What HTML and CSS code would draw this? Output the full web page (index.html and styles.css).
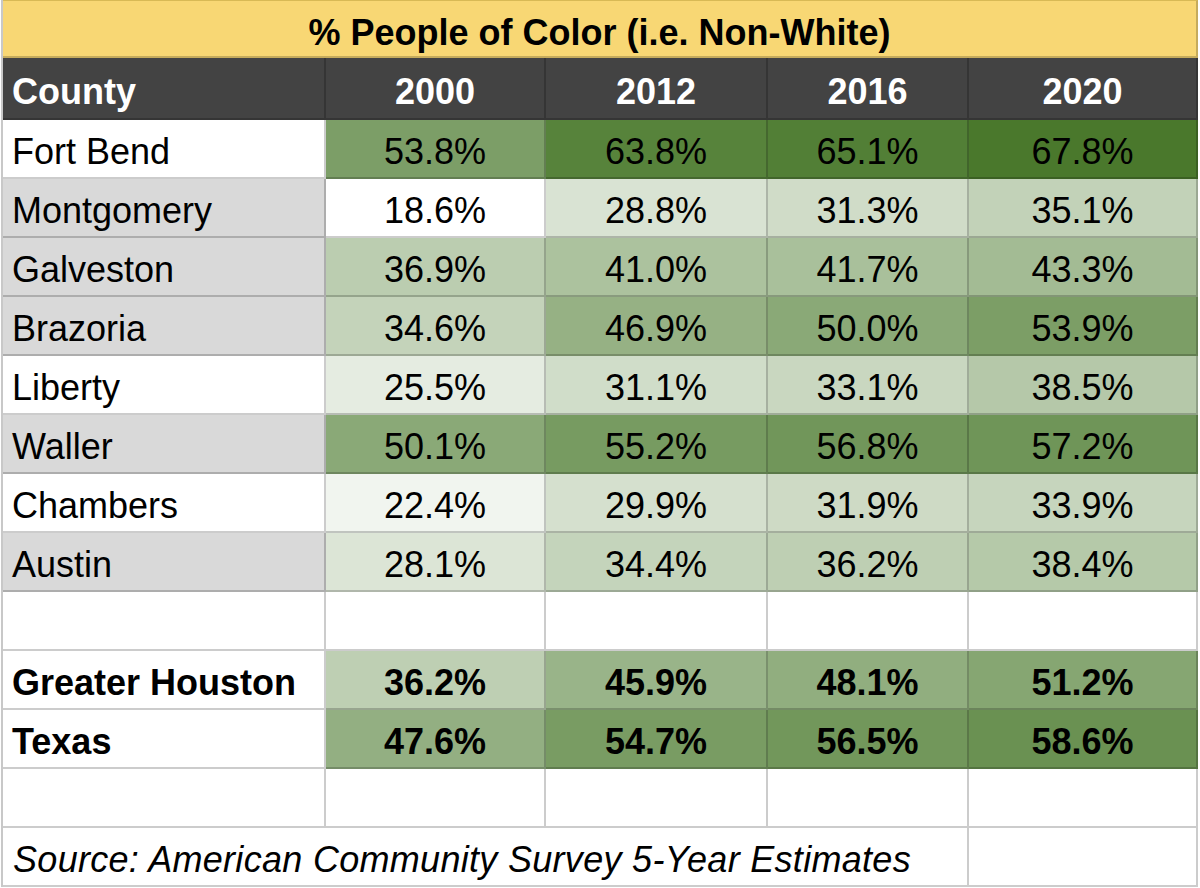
FILE: index.html
```html
<!DOCTYPE html>
<html>
<head>
<meta charset="utf-8">
<link rel="stylesheet" href="styles.css">
</head>
<body>
<div class="sheet">
  <div class="cell title">% People of Color (i.e. Non-White)</div>

  <div class="cell head label">County</div>
  <div class="cell head">2000</div>
  <div class="cell head">2012</div>
  <div class="cell head">2016</div>
  <div class="cell head">2020</div>

  <div class="cell label">Fort Bend</div>
  <div class="cell" style="background:#7c9e67">53.8%</div>
  <div class="cell" style="background:#57833b">63.8%</div>
  <div class="cell" style="background:#527f36">65.1%</div>
  <div class="cell" style="background:#4a782c">67.8%</div>

  <div class="cell label gray">Montgomery</div>
  <div class="cell" style="background:#ffffff">18.6%</div>
  <div class="cell" style="background:#d9e3d3">28.8%</div>
  <div class="cell" style="background:#d0dcc8">31.3%</div>
  <div class="cell" style="background:#c2d2b8">35.1%</div>

  <div class="cell label gray">Galveston</div>
  <div class="cell" style="background:#bbcdb0">36.9%</div>
  <div class="cell" style="background:#acc29e">41.0%</div>
  <div class="cell" style="background:#a9c09b">41.7%</div>
  <div class="cell" style="background:#a3bb94">43.3%</div>

  <div class="cell label gray">Brazoria</div>
  <div class="cell" style="background:#c4d3ba">34.6%</div>
  <div class="cell" style="background:#96b184">46.9%</div>
  <div class="cell" style="background:#8aa977">50.0%</div>
  <div class="cell" style="background:#7c9e66">53.9%</div>

  <div class="cell label">Liberty</div>
  <div class="cell" style="background:#e5ece1">25.5%</div>
  <div class="cell" style="background:#d0ddc9">31.1%</div>
  <div class="cell" style="background:#c9d7c0">33.1%</div>
  <div class="cell" style="background:#b5c8a9">38.5%</div>

  <div class="cell label gray">Waller</div>
  <div class="cell" style="background:#8aa977">50.1%</div>
  <div class="cell" style="background:#779b61">55.2%</div>
  <div class="cell" style="background:#71965a">56.8%</div>
  <div class="cell" style="background:#6f9558">57.2%</div>

  <div class="cell label">Chambers</div>
  <div class="cell" style="background:#f1f5ef">22.4%</div>
  <div class="cell" style="background:#d5e0ce">29.9%</div>
  <div class="cell" style="background:#cedac5">31.9%</div>
  <div class="cell" style="background:#c6d5bd">33.9%</div>

  <div class="cell label gray">Austin</div>
  <div class="cell" style="background:#dce5d6">28.1%</div>
  <div class="cell" style="background:#c4d4bb">34.4%</div>
  <div class="cell" style="background:#becfb3">36.2%</div>
  <div class="cell" style="background:#b5c9a9">38.4%</div>

  <div class="cell"></div>
  <div class="cell"></div>
  <div class="cell"></div>
  <div class="cell"></div>
  <div class="cell"></div>

  <div class="cell label bold">Greater Houston</div>
  <div class="cell bold" style="background:#becfb3">36.2%</div>
  <div class="cell bold" style="background:#99b489">45.9%</div>
  <div class="cell bold" style="background:#91ae7f">48.1%</div>
  <div class="cell bold" style="background:#86a672">51.2%</div>

  <div class="cell label bold">Texas</div>
  <div class="cell bold" style="background:#93af82">47.6%</div>
  <div class="cell bold" style="background:#799c63">54.7%</div>
  <div class="cell bold" style="background:#72975b">56.5%</div>
  <div class="cell bold" style="background:#6a9152">58.6%</div>

  <div class="cell"></div>
  <div class="cell"></div>
  <div class="cell"></div>
  <div class="cell"></div>
  <div class="cell"></div>

  <div class="cell label source">Source: American Community Survey 5-Year Estimates</div>
  <div class="cell"></div>
</div>
</body>
</html>
```
FILE: styles.css
```css
html, body {
  margin: 0;
  padding: 0;
  background: #ffffff;
}

body {
  font-family: "Liberation Sans", Arial, sans-serif;
  font-size: 36px;
  color: #000000;
}

.sheet {
  display: grid;
  grid-template-columns: 323px 220px 222px 201px 229px;
  grid-template-rows: 58px 62px repeat(13, 59px);
  width: max-content;
  margin-left: 1px;
  border-left: 2px solid #c8c8c8;
}

.cell {
  box-sizing: border-box;
  display: flex;
  align-items: center;
  justify-content: center;
  padding-top: 7px;
  border-right: 2px solid rgba(0, 0, 0, 0.2);
  border-bottom: 2px solid rgba(0, 0, 0, 0.2);
  background-clip: border-box;
  white-space: nowrap;
  line-height: 1;
}

.title {
  grid-column: 1 / -1;
  background: #f8d774;
  font-weight: bold;
  border-top: 1px solid #d8b955;
  padding-top: 8px;
}

.head {
  background: #434343;
  color: #ffffff;
  font-weight: bold;
}

.label {
  justify-content: flex-start;
  padding-left: 9px;
}

.gray {
  background: #d9d9d9;
}

.bold {
  font-weight: bold;
}

.source {
  grid-column: 1 / 5;
  font-style: italic;
  padding-left: 10px;
  letter-spacing: 0.3px;
}
```
